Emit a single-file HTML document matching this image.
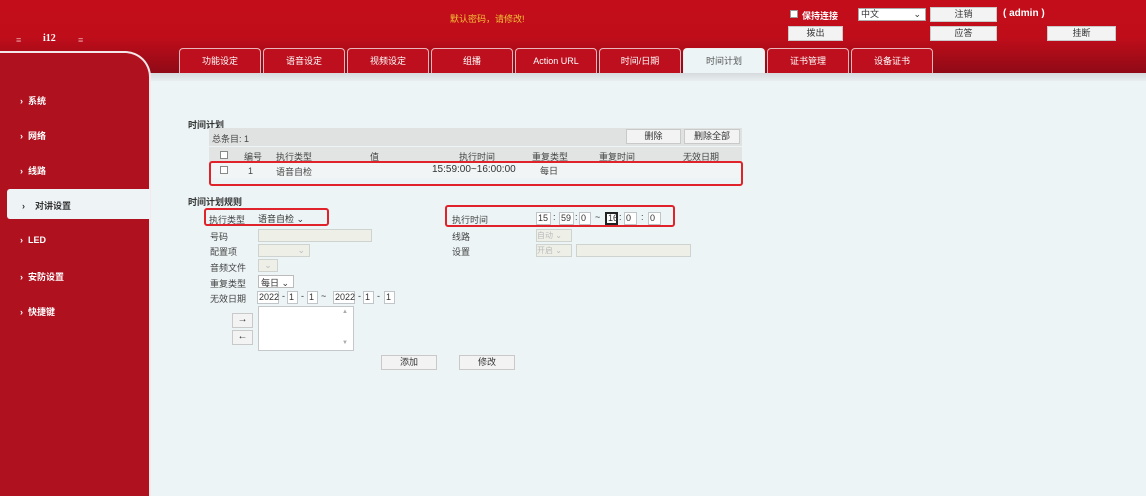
<!DOCTYPE html>
<html><head><meta charset="utf-8"><style>
*{margin:0;padding:0;box-sizing:border-box}
body{width:1146px;height:496px;overflow:hidden;background:#ecf4f6;font-family:"Liberation Sans","Noto Sans CJK SC",sans-serif;font-size:9px;color:#333;position:relative}
.a{position:absolute}
.hdr{left:0;top:0;width:1146px;height:74px;background:linear-gradient(180deg,#c40d1a 0%,#c00d1a 50%,#8e0a16 100%)}
.strip{left:150px;top:73px;width:996px;height:8px;background:linear-gradient(#d7dadd,#e8eef0)}
.side{left:0;top:51px;width:151px;height:445px;background:#b0111f;border-top:2px solid #f4e8ea;border-right:2px solid #f4e8ea;border-top-right-radius:26px}
.side2{left:0;top:85px;width:149px;height:411px;background:#b0111f}
.si{left:20px;color:#fff;font-weight:bold;font-size:9px}
.tab{top:48px;width:82px;height:25px;background:#bd0f1d;border:1px solid #e9b7bb;border-bottom:none;border-radius:4px 4px 0 0;color:#fff;text-align:center;line-height:25px;font-size:9px}
.btn{background:#f3f3f3;border:1px solid #c9c9c9;text-align:center;color:#333;font-size:9px}
.inp{position:absolute;background:#fff;border:1px solid #bfc5c8;height:13px;font-size:9px;line-height:11px;padding-left:1px}
.sep{position:absolute;font-size:9px}
.dis{background:#eef0e8;border:1px solid #cfd3d0}
.red{border:2px solid #e0222b;border-radius:3px}
.lbl{font-size:9px;color:#444}
</style></head><body>
<div class="a hdr"></div>
<div class="a" style="left:450px;top:12px;color:#f2c337;font-size:9px">默认密码，请修改!</div>
<div class="a" style="left:16px;top:35px;color:#e8a0a6;font-size:9px">≡</div>
<div class="a" style="left:43px;top:33px;color:#fff;font-weight:bold;font-size:10px;font-family:'Liberation Serif',serif">i12</div>
<div class="a" style="left:78px;top:35px;color:#e8a0a6;font-size:9px">≡</div>
<div class="a" style="left:790px;top:10px;width:8px;height:8px;background:#fff;border:1px solid #999"></div>
<div class="a" style="left:802px;top:9px;color:#fff;font-weight:bold;font-size:9px">保持连接</div>
<div class="a" style="left:858px;top:8px;width:68px;height:13px;background:#fff;border:1px solid #aaa;font-size:9px;line-height:11px;padding-left:2px">中文<span style="position:absolute;right:4px;top:0">⌄</span></div>
<div class="a btn" style="left:930px;top:7px;width:67px;height:15px;line-height:13px">注销</div>
<div class="a" style="left:1003px;top:8px;color:#fff;font-weight:bold;font-size:10px">( admin )</div>
<div class="a btn" style="left:788px;top:26px;width:55px;height:15px;line-height:13px">拨出</div>
<div class="a btn" style="left:930px;top:26px;width:67px;height:15px;line-height:13px">应答</div>
<div class="a btn" style="left:1047px;top:26px;width:69px;height:15px;line-height:13px">挂断</div>
<div class="a tab" style="left:179px">功能设定</div>
<div class="a tab" style="left:263px">语音设定</div>
<div class="a tab" style="left:347px">视频设定</div>
<div class="a tab" style="left:431px">组播</div>
<div class="a tab" style="left:515px">Action URL</div>
<div class="a tab" style="left:599px">时间/日期</div>
<div class="a tab" style="left:683px;background:#ecf4f6;color:#555;border-color:#eee">时间计划</div>
<div class="a tab" style="left:767px">证书管理</div>
<div class="a tab" style="left:851px">设备证书</div>
<div class="a strip"></div>
<div class="a side"></div>
<div class="a side2"></div>
<div class="a si" style="top:94px">› &nbsp;系统</div>
<div class="a si" style="top:129px">› &nbsp;网络</div>
<div class="a si" style="top:164px">› &nbsp;线路</div>
<div class="a" style="left:7px;top:189px;width:143px;height:30px;background:#eef3f6;border-radius:3px 0 0 3px"></div>
<div class="a" style="left:22px;top:199px;color:#333;font-weight:bold;font-size:9px">› &nbsp;&nbsp;&nbsp;对讲设置</div>
<div class="a si" style="top:235px">› &nbsp;LED</div>
<div class="a si" style="top:270px">› &nbsp;安防设置</div>
<div class="a si" style="top:305px">› &nbsp;快捷键</div>

<div class="a" style="left:188px;top:118px;font-weight:bold;font-size:9px">时间计划</div>
<div class="a" style="left:209px;top:128px;width:533px;height:18px;background:#e0e2e2"></div>
<div class="a lbl" style="left:212px;top:132px">总条目: 1</div>
<div class="a btn" style="left:626px;top:129px;width:55px;height:15px;line-height:13px">删除</div>
<div class="a btn" style="left:684px;top:129px;width:56px;height:15px;line-height:13px">删除全部</div>
<div class="a" style="left:209px;top:147px;width:533px;height:15px;background:#e2e4e4"></div>
<div class="a" style="left:220px;top:151px;width:8px;height:8px;border:1px solid #888;background:#fff"></div>
<div class="a lbl" style="left:244px;top:150px">编号</div>
<div class="a lbl" style="left:276px;top:150px">执行类型</div>
<div class="a lbl" style="left:370px;top:150px">值</div>
<div class="a lbl" style="left:459px;top:150px">执行时间</div>
<div class="a lbl" style="left:532px;top:150px">重复类型</div>
<div class="a lbl" style="left:599px;top:150px">重复时间</div>
<div class="a lbl" style="left:683px;top:150px">无效日期</div>
<div class="a" style="left:211px;top:163px;width:530px;height:15px;background:#f2f5f5"></div>
<div class="a" style="left:220px;top:166px;width:8px;height:8px;border:1px solid #888;background:#fff"></div>
<div class="a lbl" style="left:248px;top:166px">1</div>
<div class="a lbl" style="left:276px;top:165px">语音自检</div>
<div class="a" style="left:432px;top:164px;font-size:10px">15:59:00~16:00:00</div>
<div class="a lbl" style="left:540px;top:164px">每日</div>
<div class="a red" style="left:209px;top:161px;width:534px;height:25px"></div>

<div class="a" style="left:188px;top:195px;font-weight:bold;font-size:9px">时间计划规则</div>
<div class="a lbl" style="left:209px;top:213px">执行类型</div>
<div class="a" style="left:258px;top:212px;width:52px;height:12px;font-size:9px">语音自检 ⌄</div>
<div class="a red" style="left:204px;top:208px;width:125px;height:18px"></div>
<div class="a lbl" style="left:452px;top:213px">执行时间</div>
<span class="inp" style="left:536px;top:212px;width:15px">15</span><span class="sep" style="left:553px;top:212px">:</span>
<span class="inp" style="left:559px;top:212px;width:15px">59</span><span class="sep" style="left:575px;top:212px">:</span>
<span class="inp" style="left:579px;top:212px;width:12px">0</span><span class="sep" style="left:595px;top:212px">~</span>
<span class="inp" style="left:605px;top:212px;width:13px;border:2px solid #222;line-height:9px">16</span><span class="sep" style="left:619px;top:212px">:</span>
<span class="inp" style="left:624px;top:212px;width:13px">0</span><span class="sep" style="left:641px;top:212px">:</span>
<span class="inp" style="left:648px;top:212px;width:13px">0</span>
<div class="a red" style="left:445px;top:205px;width:230px;height:22px"></div>
<div class="a lbl" style="left:210px;top:230px">号码</div>
<div class="a dis" style="left:258px;top:229px;width:114px;height:13px"></div>
<div class="a lbl" style="left:452px;top:230px">线路</div>
<div class="a dis" style="left:536px;top:229px;width:36px;height:13px;color:#bbb;font-size:8px">自动 ⌄</div>
<div class="a lbl" style="left:210px;top:245px">配置项</div>
<div class="a dis" style="left:258px;top:244px;width:52px;height:13px;color:#bbb;text-align:right;padding-right:4px">⌄</div>
<div class="a lbl" style="left:452px;top:245px">设置</div>
<div class="a dis" style="left:536px;top:244px;width:36px;height:13px;color:#bbb;font-size:8px">开启 ⌄</div>
<div class="a dis" style="left:576px;top:244px;width:115px;height:13px"></div>
<div class="a lbl" style="left:210px;top:261px">音频文件</div>
<div class="a dis" style="left:258px;top:259px;width:20px;height:13px;color:#bbb;text-align:center">⌄</div>
<div class="a lbl" style="left:210px;top:277px">重复类型</div>
<div class="a" style="left:258px;top:275px;width:36px;height:13px;background:#fff;border:1px solid #bbb;font-size:9px;padding-left:2px">每日 ⌄</div>
<div class="a lbl" style="left:210px;top:292px">无效日期</div>
<span class="inp" style="left:257px;top:291px;width:22px">2022</span><span class="sep" style="left:282px;top:291px">-</span>
<span class="inp" style="left:287px;top:291px;width:11px">1</span><span class="sep" style="left:301px;top:291px">-</span>
<span class="inp" style="left:307px;top:291px;width:11px">1</span><span class="sep" style="left:321px;top:291px">~</span>
<span class="inp" style="left:333px;top:291px;width:22px">2022</span><span class="sep" style="left:358px;top:291px">-</span>
<span class="inp" style="left:363px;top:291px;width:11px">1</span><span class="sep" style="left:377px;top:291px">-</span>
<span class="inp" style="left:384px;top:291px;width:11px">1</span>
<div class="a btn" style="left:232px;top:313px;width:21px;height:15px;line-height:12px;font-size:10px">→</div>
<div class="a btn" style="left:232px;top:330px;width:21px;height:15px;line-height:12px;font-size:10px">←</div>
<div class="a" style="left:258px;top:306px;width:96px;height:45px;background:#fff;border:1px solid #c5c8ca"></div>
<div class="a" style="left:342px;top:309px;color:#aaa;font-size:6px">▲</div>
<div class="a" style="left:342px;top:340px;color:#aaa;font-size:6px">▼</div>
<div class="a btn" style="left:381px;top:355px;width:56px;height:15px;line-height:13px">添加</div>
<div class="a btn" style="left:459px;top:355px;width:56px;height:15px;line-height:13px">修改</div>
</body></html>
